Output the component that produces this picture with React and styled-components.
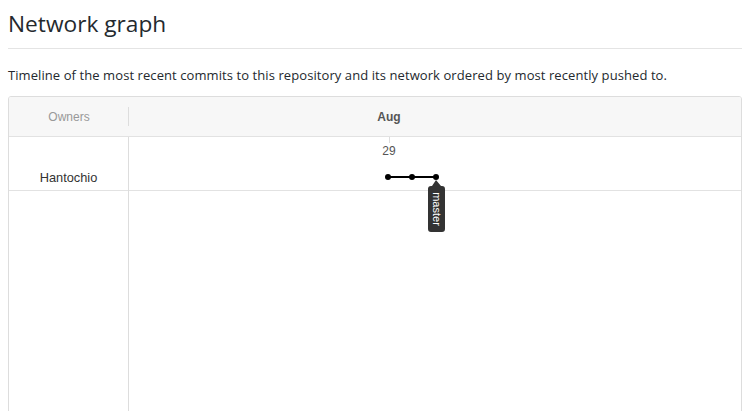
import styled, { createGlobalStyle } from "styled-components";

const Global = createGlobalStyle`
  html, body { margin: 0; background: #fff; }
  body { font-family: "Open Sans", "Noto Sans", sans-serif; color: #24292e; overflow: hidden; }
`;

const Page = styled("div")`
  padding: 0 14px 0 8px;
`;

const Title = styled("h2")`
  margin: 0;
  padding: 9px 0 9px;
  font-size: 22.7px;
  font-weight: 400;
  line-height: 30px;
  color: #24292e;
  border-bottom: 1px solid #e4e4e4;
`;

const Lead = styled("p")`
  margin: 17px 0 12px;
  font-size: 13px;
  letter-spacing: 0.08px;
  line-height: 18px;
  color: #24292e;
`;

const Graph = styled("div")`
  border: 1px solid #ddd;
  border-radius: 3px;
  height: 330px;
  display: grid;
  grid-template-columns: 120px 1fr;
  grid-template-rows: 40px 1fr;
  font-family: "Liberation Sans", Arial, sans-serif;
  font-size: 12px;
  overflow: hidden;
`;

const HeadCell = styled("div")`
  background: #f7f7f7;
  border-bottom: 1px solid #e2e2e2;
  display: flex;
  align-items: center;
  justify-content: ${(p) => (p.$center ? "center" : "flex-start")};
  position: relative;
  color: ${(p) => p.$color || "#999"};
`;

const HeadDivider = styled("span")`
  position: absolute;
  right: 0;
  top: 10px;
  height: 19px;
  border-right: 1px solid #ddd;
`;

const Owners = styled("div")`
  border-right: 1px solid #ddd;
`;

const OwnerRow = styled("div")`
  height: 54px;
  border-bottom: 1px solid #e2e2e2;
  display: flex;
  align-items: flex-end;
  justify-content: center;
  padding-bottom: 5px;
  box-sizing: border-box;
  font-size: 12.8px;
  color: #333;
`;

const Timeline = styled("div")`
  position: relative;
`;

const TimeRow = styled("div")`
  height: 54px;
  border-bottom: 1px solid #e2e2e2;
  box-sizing: border-box;
`;

const Month = styled("span")`
  position: absolute;
  left: ${(p) => p.$x}px;
  top: 13px;
  transform: translateX(-50%);
  font-weight: 700;
  color: #555;
`;

const Day = styled("span")`
  position: absolute;
  left: ${(p) => p.$x}px;
  top: 7px;
  transform: translateX(-50%);
  color: #555;
`;

const Canvas = styled("svg")`
  position: absolute;
  left: 0;
  top: 0;
  width: 100%;
  height: 100%;
  overflow: visible;
`;

const BranchLabel = styled("text")`
  font-family: "Liberation Sans", Arial, sans-serif;
  font-size: 11px;
  fill: #fff;
`;

const commits = [259, 283, 307];

export default function App() {
  const headX = commits[commits.length - 1];
  return (
    <>
      <Global />
      <Page>
        <Title>Network graph</Title>
        <Lead>
          Timeline of the most recent commits to this repository and its network ordered by most recently pushed to.
        </Lead>
        <Graph>
          <HeadCell $center>
            Owners
            <HeadDivider />
          </HeadCell>
          <HeadCell $color="#555">
            <Month $x={260}>Aug</Month>
          </HeadCell>
          <Owners>
            <OwnerRow>Hantochio</OwnerRow>
          </Owners>
          <Timeline>
            <TimeRow />
            <Day $x={260}>29</Day>
            <Canvas>
              <line x1="260.5" y1="0" x2="260.5" y2="6" stroke="#ddd" strokeWidth="1" />
              <line x1={commits[0]} y1="40" x2={headX} y2="40" stroke="#000" strokeWidth="2" />
              {commits.map((x) => (
                <circle key={x} cx={x} cy="40" r="3" fill="#000" />
              ))}
              <path
                d={`M ${headX} 43 L ${headX + 5} 49 L ${headX + 6} 49 Q ${headX + 9} 49 ${headX + 9} 52 L ${headX + 9} 92 Q ${headX + 9} 95 ${headX + 6} 95 L ${headX - 5} 95 Q ${headX - 8} 95 ${headX - 8} 92 L ${headX - 8} 52 Q ${headX - 8} 49 ${headX - 5} 49 L ${headX - 4} 49 Z`}
                fill="#333"
              />
              <BranchLabel
                x={headX + 0.5}
                y="72"
                textAnchor="middle"
                dominantBaseline="central"
                transform={`rotate(90 ${headX + 0.5} 72)`}
              >
                master
              </BranchLabel>
            </Canvas>
          </Timeline>
        </Graph>
      </Page>
    </>
  );
}
